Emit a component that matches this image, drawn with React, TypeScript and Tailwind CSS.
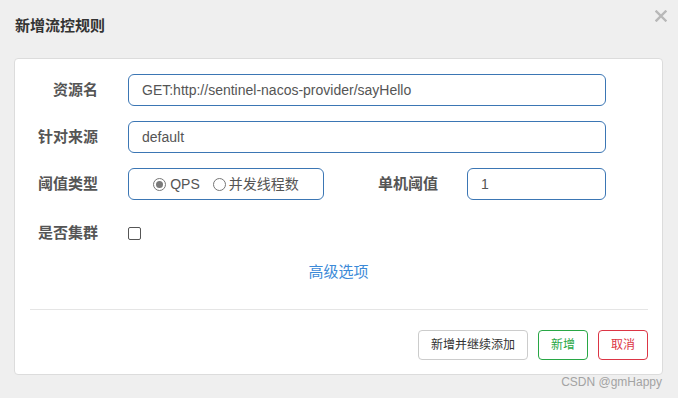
import React from "react";

const font = { fontFamily: '"Liberation Sans", "Noto Sans CJK SC", sans-serif' };

function Label({ children, className = "" }: { children: React.ReactNode; className?: string }) {
  return (
    <div className={"w-[83px] shrink-0 text-right text-[15px] leading-[20px] font-bold text-[#555] " + className}>
      {children}
    </div>
  );
}

function Radio({ checked }: { checked?: boolean }) {
  return (
    <span className="w-[13px] h-[13px] rounded-full border border-[#767676] bg-white flex items-center justify-center shrink-0">
      {checked ? <span className="w-[7px] h-[7px] rounded-full bg-[#7a7a7a]" /> : null}
    </span>
  );
}

export default function App() {
  return (
    <div className="relative w-[678px] h-[398px] bg-[#efefef] overflow-hidden" style={font}>
      <div className="h-[58px] pl-[15px] pt-[17px]">
        <div className="text-[15px] leading-[18px] font-bold text-[#333]">新增流控规则</div>
      </div>
      <svg className="absolute left-[655px] top-[10px]" width="12" height="12" viewBox="0 0 12 12">
        <path d="M1.5 1.5 L10.5 10.5 M10.5 1.5 L1.5 10.5" stroke="#b8b8b8" strokeWidth="2.4" strokeLinecap="square" />
      </svg>

      <div className="ml-[14px] w-[649px] h-[317px] bg-white border border-[#dcdcdc] rounded-[4px] pt-[15px]">
        <div className="flex items-center h-[32px]">
          <Label>资源名</Label>
          <div className="ml-[30px] w-[478px] h-[32px] border border-[#3b76b4] rounded-[6px] flex items-center pl-[13px] text-[14px] text-[#555]">
            GET:http://sentinel-nacos-provider/sayHello
          </div>
        </div>
        <div className="flex items-center h-[32px] mt-[15px]">
          <Label>针对来源</Label>
          <div className="ml-[30px] w-[478px] h-[32px] border border-[#3b76b4] rounded-[6px] flex items-center pl-[13px] text-[14px] text-[#555]">
            default
          </div>
        </div>
        <div className="flex items-center h-[32px] mt-[15px]">
          <Label>阈值类型</Label>
          <div className="ml-[30px] w-[196px] h-[32px] border border-[#3b76b4] rounded-[6px] flex items-center justify-center text-[14px] leading-[18px] text-[#555]">
            <Radio checked />
            <span className="ml-[4px]">QPS</span>
            <span className="ml-[13px]"><Radio /></span>
            <span className="ml-[3px]">并发线程数</span>
          </div>
          <Label className="ml-[31px]">单机阈值</Label>
          <div className="ml-[29px] w-[139px] h-[32px] border border-[#3b76b4] rounded-[6px] flex items-center pl-[13px] text-[14px] text-[#555]">
            1
          </div>
        </div>
        <div className="flex items-center h-[32px] mt-[17px]">
          <Label>是否集群</Label>
          <span className="ml-[30px] w-[13px] h-[13px] border border-[#555] rounded-[2px] bg-white" />
        </div>
        <div className="mt-[13px] text-center text-[15px] leading-[20px] text-[#3c8ad8]">高级选项</div>
        <div className="mt-[27px] ml-[15px] mr-[14px] h-px bg-[#e5e5e5]" />
        <div className="mt-[20px] flex justify-end gap-[10px] pr-[14px]">
          <div className="w-[110px] h-[30px] border border-[#cccccc] rounded-[4px] flex items-center justify-center text-[12px] text-[#333]">
            新增并继续添加
          </div>
          <div className="w-[50px] h-[30px] border border-[#28a745] rounded-[4px] flex items-center justify-center text-[12px] text-[#28a745]">
            新增
          </div>
          <div className="w-[50px] h-[30px] border border-[#dc3545] rounded-[4px] flex items-center justify-center text-[12px] text-[#dc3545]">
            取消
          </div>
        </div>
      </div>

      <div className="absolute right-[16px] top-[375px] text-[12px] leading-[14px] text-[#a3a3a3]">CSDN @gmHappy</div>
    </div>
  );
}
